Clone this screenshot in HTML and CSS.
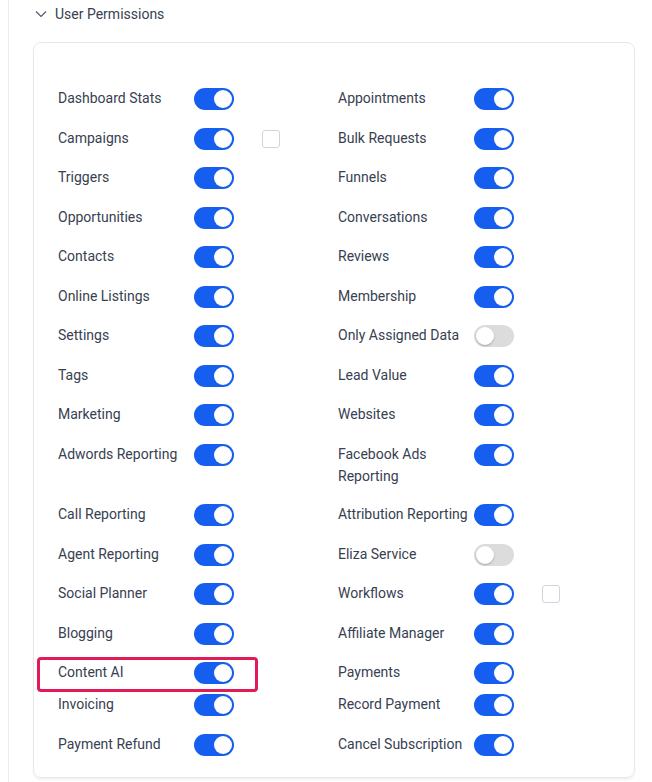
FILE: index.html
```html
<!DOCTYPE html>
<html lang="en">
<head>
<meta charset="utf-8">
<link rel="stylesheet" href="styles.css">
</head>
<body>
<div class="page">
  <div class="section">
    <div class="header">
      <svg class="chev" width="12" height="8" viewBox="0 0 12 8"><path d="M1 1.5 L6 6.5 L11 1.5" fill="none" stroke="#4b5563" stroke-width="1.1"/></svg>
      <span>User Permissions</span>
    </div>
    <div class="card">
      <div class="grid">
        <div class="item"><span class="label">Dashboard Stats</span><span class="tg on"></span></div>
        <div class="item"><span class="label">Appointments</span><span class="tg on"></span></div>

        <div class="item"><span class="label">Campaigns</span><span class="tg on"></span><span class="cb"></span></div>
        <div class="item"><span class="label">Bulk Requests</span><span class="tg on"></span></div>

        <div class="item"><span class="label">Triggers</span><span class="tg on"></span></div>
        <div class="item"><span class="label">Funnels</span><span class="tg on"></span></div>

        <div class="item"><span class="label">Opportunities</span><span class="tg on"></span></div>
        <div class="item"><span class="label">Conversations</span><span class="tg on"></span></div>

        <div class="item"><span class="label">Contacts</span><span class="tg on"></span></div>
        <div class="item"><span class="label">Reviews</span><span class="tg on"></span></div>

        <div class="item"><span class="label">Online Listings</span><span class="tg on"></span></div>
        <div class="item"><span class="label">Membership</span><span class="tg on"></span></div>

        <div class="item"><span class="label">Settings</span><span class="tg on"></span></div>
        <div class="item"><span class="label">Only Assigned Data</span><span class="tg"></span></div>

        <div class="item"><span class="label">Tags</span><span class="tg on"></span></div>
        <div class="item"><span class="label">Lead Value</span><span class="tg on"></span></div>

        <div class="item"><span class="label">Marketing</span><span class="tg on"></span></div>
        <div class="item"><span class="label">Websites</span><span class="tg on"></span></div>

        <div class="item"><span class="label">Adwords Reporting</span><span class="tg on"></span></div>
        <div class="item"><span class="label">Facebook Ads Reporting</span><span class="tg on"></span></div>

        <div class="item"><span class="label">Call Reporting</span><span class="tg on"></span></div>
        <div class="item"><span class="label">Attribution Reporting</span><span class="tg on"></span></div>

        <div class="item"><span class="label">Agent Reporting</span><span class="tg on"></span></div>
        <div class="item"><span class="label">Eliza Service</span><span class="tg"></span></div>

        <div class="item"><span class="label">Social Planner</span><span class="tg on"></span></div>
        <div class="item"><span class="label">Workflows</span><span class="tg on"></span><span class="cb"></span></div>

        <div class="item"><span class="label">Blogging</span><span class="tg on"></span></div>
        <div class="item"><span class="label">Affiliate Manager</span><span class="tg on"></span></div>

        <div class="item tight"><div class="highlight"></div><span class="label">Content AI</span><span class="tg on"></span></div>
        <div class="item tight"><span class="label">Payments</span><span class="tg on"></span></div>

        <div class="item"><span class="label">Invoicing</span><span class="tg on"></span></div>
        <div class="item"><span class="label">Record Payment</span><span class="tg on"></span></div>

        <div class="item last"><span class="label">Payment Refund</span><span class="tg on"></span></div>
        <div class="item last"><span class="label">Cancel Subscription</span><span class="tg on"></span></div>
      </div>
    </div>
  </div>
</div>
</body>
</html>
```
FILE: styles.css
```css
* { box-sizing: border-box; }
html, body { margin: 0; padding: 0; background: #ffffff; }
body {
  font-family: "Segoe UI", Roboto, "Liberation Sans", sans-serif;
  font-size: 14px;
  color: #374151;
}
.page {
  padding-left: 8px;
}
.section {
  border-left: 1px solid #ececec;
  padding: 3px 17px 0 24px;
  height: 782px;
}
.header {
  display: flex;
  align-items: center;
  height: 22px;
  margin-left: 2px;
  gap: 8px;
  color: #374151;
  line-height: 22px;
}
.chev { display: block; }
.card {
  margin-top: 17px;
  width: 602px;
  border: 1px solid #e7e8ea;
  border-radius: 8px;
  box-shadow: 0 2px 2px rgba(0,0,0,0.05);
  padding: 45px 24px 21px 24px;
}
.grid {
  display: grid;
  grid-template-columns: 280px 1fr;
}
.item {
  position: relative;
  display: flex;
  align-items: flex-start;
  padding-bottom: 17.5px;
  line-height: 22px;
}
.item.tight { padding-bottom: 10px; }
.item.last { padding-bottom: 0; }
.label {
  width: 136px;
  flex: none;
  margin-top: -1px;
  color: #374151;
}
.tg {
  flex: none;
  position: relative;
  width: 40px;
  height: 22px;
  border-radius: 11px;
  background: #dcdcdc;
}
.tg::after {
  content: "";
  position: absolute;
  top: 2px;
  left: 2px;
  width: 18px;
  height: 18px;
  border-radius: 50%;
  background: #ffffff;
  box-shadow: 0 1px 2px rgba(0,0,0,0.25);
}
.tg.on { background: #155eef; }
.tg.on::after { left: 20px; box-shadow: none; }
.cb {
  flex: none;
  margin-left: 28px;
  margin-top: 2px;
  width: 18px;
  height: 18px;
  border: 1px solid #d0d5dd;
  border-radius: 3px;
  background: #fff;
}
.highlight {
  position: absolute;
  left: -21px;
  top: -5px;
  width: 221px;
  height: 35px;
  border: 3px solid #e21a57;
  border-radius: 4px;
  pointer-events: none;
}
```
